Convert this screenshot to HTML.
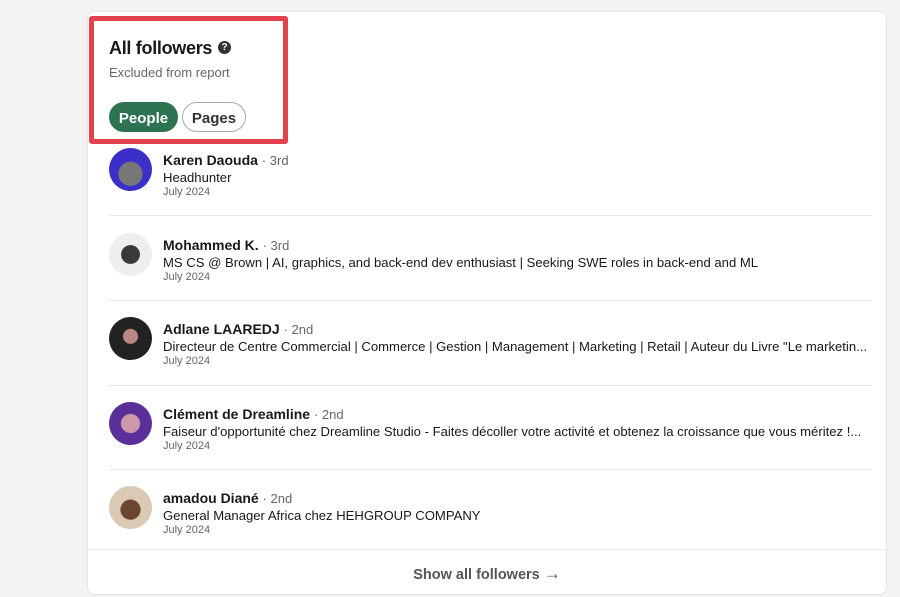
<!DOCTYPE html>
<html><head><meta charset="utf-8"><style>
*{margin:0;padding:0;box-sizing:border-box}
body{width:900px;height:597px;background:#f4f3f1;font-family:"Liberation Sans",sans-serif;position:relative;overflow:hidden;color:#191919}
.card{position:absolute;left:87px;top:11px;width:800px;height:584px;background:#fff;border:1px solid #e6e5e2;border-radius:8px}
.red{position:absolute;left:89px;top:16px;width:199px;height:128px;border:5px solid #e2424b;border-radius:3px}
h1{position:absolute;left:109px;top:38px;font-size:18px;font-weight:bold;letter-spacing:-0.3px}
.q{position:absolute;left:218px;top:41px;width:13px;height:13px;border-radius:50%;background:#333;color:#fff;font-size:10px;font-weight:bold;text-align:center;line-height:13px}
.sub{position:absolute;left:109px;top:65px;font-size:13px;color:#666}
.pill{position:absolute;top:102px;height:30px;border-radius:15px;font-size:15px;font-weight:bold;line-height:31px;text-align:center}
.row{position:absolute;left:109px;width:763px;height:85px}
.av{position:absolute;left:0;top:-10px;width:43px;height:43px;border-radius:50%}
.nm{position:absolute;left:54px;top:-6px;font-size:14px;font-weight:bold;white-space:nowrap}
.nm span{font-weight:normal;color:#666;font-size:13px}
.hl{position:absolute;left:54px;top:12px;font-size:13.1px;white-space:nowrap}
.dt{position:absolute;left:54px;top:28px;font-size:11px;color:#666}
.div{position:absolute;left:109px;width:763px;height:1px;background:#e8e8e8}
</style></head><body>
<div class="card"></div>
<div class="red"></div>
<h1>All followers</h1><div class="q">?</div>
<div class="sub">Excluded from report</div>
<div class="pill" style="left:109px;width:69px;background:#2d7352;color:#fff;border:1px solid #2d7352">People</div>
<div class="pill" style="left:182px;width:64px;background:#fff;color:#333;border:1px solid #aaa">Pages</div>

<div class="row" style="top:158px"><div class="av" style="background:radial-gradient(circle at 50% 60%,#777 0 35%,#3b2fc9 37%)"></div><div class="nm">Karen Daouda <span>· 3rd</span></div><div class="hl">Headhunter</div><div class="dt">July 2024</div></div>
<div class="div" style="top:215px"></div>
<div class="row" style="top:243px"><div class="av" style="background:radial-gradient(circle at 50% 50%,#3a3a3a 0 30%,#eee 32%)"></div><div class="nm">Mohammed K. <span>· 3rd</span></div><div class="hl">MS CS @ Brown | AI, graphics, and back-end dev enthusiast | Seeking SWE roles in back-end and ML</div><div class="dt">July 2024</div></div>
<div class="div" style="top:300px"></div>
<div class="row" style="top:327px"><div class="av" style="background:radial-gradient(circle at 50% 45%,#b88 0 22%,#222 25%)"></div><div class="nm">Adlane LAAREDJ <span>· 2nd</span></div><div class="hl">Directeur de Centre Commercial | Commerce | Gestion | Management | Marketing | Retail | Auteur du Livre "Le marketin...</div><div class="dt">July 2024</div></div>
<div class="div" style="top:385px"></div>
<div class="row" style="top:412px"><div class="av" style="background:radial-gradient(circle at 50% 50%,#c9a 0 30%,#5b2f9a 33%)"></div><div class="nm">Clément de Dreamline <span>· 2nd</span></div><div class="hl">Faiseur d'opportunité chez Dreamline Studio - Faites décoller votre activité et obtenez la croissance que vous méritez !...</div><div class="dt">July 2024</div></div>
<div class="div" style="top:469px"></div>
<div class="row" style="top:496px"><div class="av" style="background:radial-gradient(circle at 50% 55%,#6a4530 0 30%,#d9c9b5 33%)"></div><div class="nm">amadou Diané <span>· 2nd</span></div><div class="hl">General Manager Africa chez HEHGROUP COMPANY</div><div class="dt">July 2024</div></div>
<div style="position:absolute;left:88px;top:549px;width:798px;height:1px;background:#e8e8e8"></div>
<div style="position:absolute;left:88px;top:564px;width:798px;text-align:center;font-size:14.5px;font-weight:bold;color:#555">Show all followers <span style="font-size:17px">→</span></div>
</body></html>
